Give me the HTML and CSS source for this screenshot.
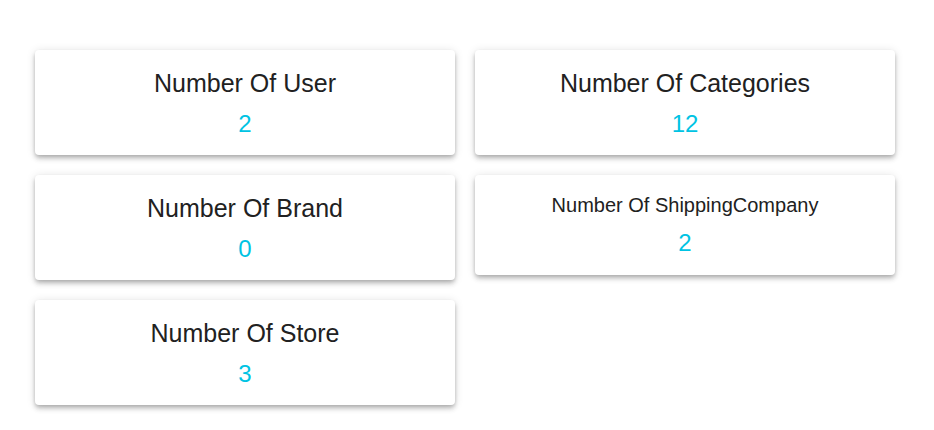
FILE: index.html
```html
<!DOCTYPE html>
<html lang="en">
<head>
<meta charset="utf-8">
<title>Dashboard</title>
<link rel="stylesheet" href="styles.css">
</head>
<body>
<main class="stats">
  <section class="card">
    <h2 class="card-title">Number Of User</h2>
    <p class="card-value">2</p>
  </section>
  <section class="card">
    <h2 class="card-title">Number Of Categories</h2>
    <p class="card-value">12</p>
  </section>
  <section class="card">
    <h2 class="card-title">Number Of Brand</h2>
    <p class="card-value">0</p>
  </section>
  <section class="card card-small">
    <h2 class="card-title">Number Of ShippingCompany</h2>
    <p class="card-value">2</p>
  </section>
  <section class="card">
    <h2 class="card-title">Number Of Store</h2>
    <p class="card-value">3</p>
  </section>
</main>
</body>
</html>
```

FILE: styles.css
```css
html, body {
  margin: 0;
  padding: 0;
  background: #ffffff;
}

body {
  font-family: "Liberation Sans", Arial, sans-serif;
  color: #212121;
}

.stats {
  display: grid;
  grid-template-columns: 420px 420px;
  column-gap: 20px;
  row-gap: 20px;
  align-items: start;
  padding: 50px 0 25px 35px;
}

.card {
  background: #ffffff;
  border-radius: 4px;
  box-shadow: 0 2px 4px -1px rgba(0, 0, 0, 0.2),
              0 4px 5px 0 rgba(0, 0, 0, 0.14),
              0 1px 10px 0 rgba(0, 0, 0, 0.12);
  padding: 19px 16px 17px;
  text-align: center;
}

.card-title {
  margin: 0;
  font-size: 25px;
  line-height: 28px;
  font-weight: 400;
  color: #212121;
}

.card-value {
  margin: 13px 0 0;
  font-size: 24px;
  line-height: 28px;
  color: #00c3e3;
}

.card-small {
  padding-bottom: 18px;
}

.card-small .card-title {
  font-size: 20px;
  line-height: 23px;
}

.card-small .card-value {
  margin-top: 12px;
}
```
